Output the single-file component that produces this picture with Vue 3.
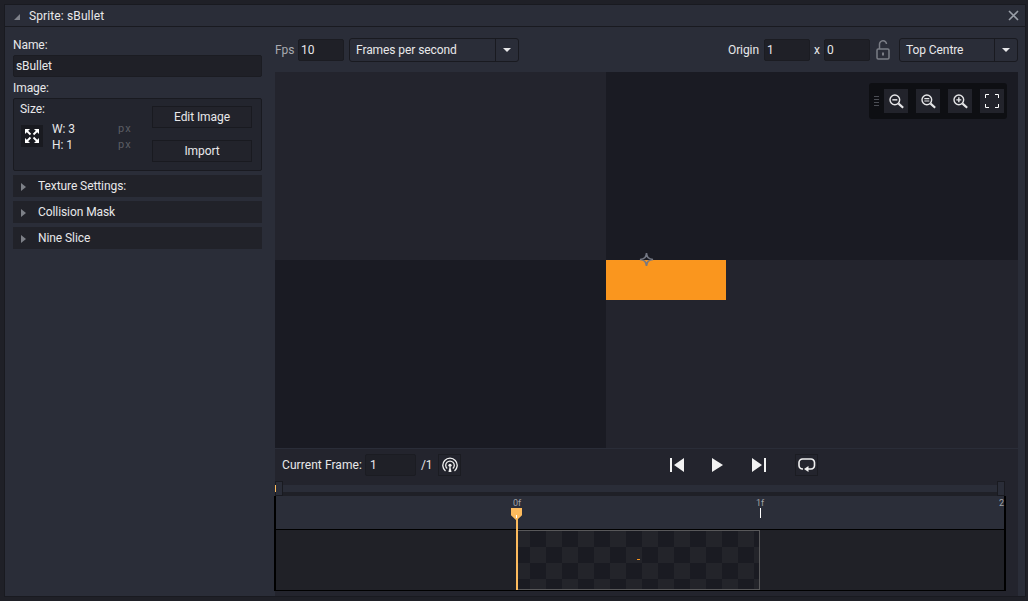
<script setup>
const sections = ['Texture Settings:', 'Collision Mask', 'Nine Slice']
</script>

<template>
  <div class="page">
    <div class="window">
      <header class="titlebar">
        <span class="corner"></span>
        <span class="title">Sprite: sBullet</span>
        <svg class="close" width="11" height="11" viewBox="0 0 11 11"><path d="M1 1l9 9M10 1l-9 9" stroke="#9a9fa8" stroke-width="1.6" fill="none"/></svg>
      </header>
      <div class="body">
        <aside class="left">
          <label class="lbl name-lbl">Name:</label>
          <div class="field name-field">sBullet</div>
          <label class="lbl image-lbl">Image:</label>
          <div class="imagebox">
            <div class="size-col">
              <div class="size-lbl">Size:</div>
              <div class="size-row">
                <div class="expand">
                  <svg width="14" height="14" viewBox="0 0 14 14" fill="#fff" stroke="#fff"><path d="M0 0h5L0 5z" stroke="none"/><path d="M14 0v5L9 0z" stroke="none"/><path d="M0 14V9l5 5z" stroke="none"/><path d="M14 14H9l5-5z" stroke="none"/><path d="M2 2l3.500 3.500M12 2L8.500 5.500M2 12l3.500-3.500M12 12L8.500 8.500" stroke-width="1.800" fill="none"/></svg>
                </div>
                <div class="dims"><span>W: 3</span><span>H: 1</span></div>
                <div class="units"><span>px</span><span>px</span></div>
              </div>
            </div>
            <div class="btns">
              <div class="btn">Edit Image</div>
              <div class="btn">Import</div>
            </div>
          </div>
          <div v-for="s in sections" :key="s" class="section">
            <span class="arrow"></span><span>{{ s }}</span>
          </div>
        </aside>
        <main class="right">
          <div class="toprow">
            <span class="dim-lbl">Fps</span>
            <div class="field fps">10</div>
            <div class="select sel-fps"><span class="sel-text">Frames per second</span><span class="caret"><i></i></span></div>
            <span class="spacer"></span>
            <span class="origin-lbl">Origin</span>
            <div class="field origin">1</div>
            <span class="x-lbl">x</span>
            <div class="field origin">0</div>
            <svg class="lock" width="14" height="20" viewBox="0 0 14 20" fill="none" stroke="#7a7d85" stroke-width="1.500"><path d="M3.500 9V4.500a3.500 3.500 0 0 1 7-.5"/><rect x="1" y="9" width="12" height="10" rx="1.200"/><path d="M7 12.500v3" stroke-width="2"/></svg>
            <div class="select sel-origin"><span class="sel-text">Top Centre</span><span class="caret"><i></i></span></div>
          </div>
          <div class="canvas">
            <div class="q light"></div><div class="q dark"></div>
            <div class="q dark"></div><div class="q light"></div>
            <div class="sprite"></div>
            <svg class="origin-mark" width="15" height="15" viewBox="0 0 15 15" fill="none" stroke="#747884" stroke-width="1.600"><path d="M7.500 1C8 5.500 9.500 7 14 7.500 9.500 8 8 9.500 7.500 14 7 9.500 5.500 8 1 7.500 5.500 7 7 5.500 7.500 1z"/></svg>
            <div class="zoombar">
              <span class="grip"><i></i><i></i><i></i><i></i></span>
              <div class="zbtn"><svg width="15" height="15" viewBox="0 0 18 18" fill="none" stroke="#e6e6e8" stroke-width="1.700"><circle cx="7" cy="7" r="5.800"/><path d="M4 7h6"/><path d="M11.500 11.500l5.500 5" stroke-width="2.600"/></svg></div>
              <div class="zbtn"><svg width="15" height="15" viewBox="0 0 18 18" fill="none" stroke="#e6e6e8" stroke-width="1.700"><circle cx="7" cy="7" r="5.800"/><path d="M4 5.600h6M4 8.400h6" stroke-width="1.400"/><path d="M11.500 11.500l5.500 5" stroke-width="2.600"/></svg></div>
              <div class="zbtn"><svg width="15" height="15" viewBox="0 0 18 18" fill="none" stroke="#e6e6e8" stroke-width="1.700"><circle cx="7" cy="7" r="5.800"/><path d="M4 7h6M7 4v6"/><path d="M11.500 11.500l5.500 5" stroke-width="2.600"/></svg></div>
              <div class="zbtn"><svg width="14" height="14" viewBox="0 0 14 14" fill="none" stroke="#fff" stroke-width="1"><path d="M.5 4V.5H4M10 .5h3.500V4M13.500 10v3.500H10M4 13.500H.5V10"/></svg></div>
            </div>
          </div>
          <div class="lower">
            <div class="transport">
              <div class="tleft">
                <span class="cf-lbl">Current Frame:</span>
                <div class="field cf">1</div>
                <span class="of">/1</span>
                <div class="tbtn onion"><svg width="16" height="16" viewBox="0 0 16 16" fill="none" stroke="#f0f0f0" stroke-width="1.300"><path d="M3.500 14A7.200 7.200 0 1 1 12.500 14"/><path d="M5.200 11.600a4.300 4.300 0 1 1 5.600 0"/><circle cx="8" cy="8.300" r="1.600" fill="#f0f0f0" stroke="none"/><path d="M6.500 15l1-5h1l1 5z" fill="#f0f0f0" stroke="none"/></svg></div>
              </div>
              <div class="tcenter">
                <svg width="14" height="14" viewBox="0 0 14 14" fill="#f2f2f2"><path d="M0 0h2v14H0zM14 0v14L4 7z"/></svg>
                <svg class="play" width="11" height="14" viewBox="0 0 11 14" fill="#f2f2f2"><path d="M0 0l11 7L0 14z"/></svg>
                <svg width="14" height="14" viewBox="0 0 14 14" fill="#f2f2f2"><path d="M12 0h2v14h-2zM0 0v14l10-7z"/></svg>
              </div>
              <div class="tbtn loop"><svg width="18" height="14" viewBox="0 0 18 14" fill="none" stroke="#f0f0f0" stroke-width="1.600"><path d="M5 11H4.500A3.500 3.500 0 0 1 1 7.500v-3A3.500 3.500 0 0 1 4.500 1h8A3.500 3.500 0 0 1 16.500 4.500v3A3.500 3.500 0 0 1 13 11H9"/><path d="M10.500 8v6L6 11z" fill="#f0f0f0" stroke="none"/></svg></div>
            </div>
            <div class="scroll">
              <span class="handle hl"><i></i></span>
              <span class="handle hr"></span>
            </div>
            <div class="timeline">
              <div class="ruler"></div>
              <div class="track"></div>
              <span class="tick-lbl l0">0f</span>
              <span class="tick-lbl l1">1f</span>
              <span class="tick-lbl l2">2</span>
              <span class="tick"></span>
              <div class="frame"><span class="mini"></span></div>
              <span class="ph-line"></span>
              <span class="ph-head"></span>
              <span class="ph-mark"></span>
            </div>
          </div>
        </main>
      </div>
    </div>
  </div>
</template>

<style>
html, body { margin: 0; background: #1f2027; overflow: hidden; }
</style>

<style scoped>
.page {
  width: 1028px; height: 601px; box-sizing: border-box;
  padding: 4px 2px 4px 4px;
  font-family: Roboto, "Liberation Sans", sans-serif;
  font-size: 12px; letter-spacing: -.08px; color: #e8e8ea;
  white-space: nowrap;
}
.window {
  height: 100%; box-sizing: border-box;
  border: 1px solid #191a20;
  background: #2a2d38;
  display: flex; flex-direction: column;
}
.titlebar {
  height: 21px; flex: none; display: flex; align-items: center;
  border-bottom: 1px solid #191a20;
  padding-left: 9px; padding-right: 6px;
}
.corner { width: 0; height: 0; border-left: 6px solid transparent; border-bottom: 6px solid #7f828a; margin-right: 9px; margin-top: 2px; }
.title { flex: 1; letter-spacing: .12px; }
.close { flex: none; }
.body { flex: 1; display: flex; padding-left: 8px; min-height: 0; }
.left { width: 249px; flex: none; margin-right: 13px; display: flex; flex-direction: column; }
.lbl { display: block; line-height: 14px; }
.name-lbl { margin-top: 11px; margin-bottom: 3px; }
.image-lbl { margin-top: 4px; margin-bottom: 3px; }
.field {
  box-sizing: border-box; background: #1f2027; border: 1px solid #1b1c22; border-radius: 2px;
  height: 22px; line-height: 20px; padding-left: 2px;
}
.imagebox {
  box-sizing: border-box; height: 73px; background: #23252e; border: 1px solid #191a20; border-radius: 2px;
  display: flex; justify-content: space-between; padding: 7px 9px 0 6px;
}
.size-lbl { line-height: 14px; margin-top: -4px; }
.size-row { display: flex; margin-top: 8px; }
.expand {
  width: 24px; height: 24px; box-sizing: border-box; background: #191a20; border: 1px solid #23252e;
  display: flex; align-items: center; justify-content: center; margin-right: 8px;
}
.dims, .units { display: flex; flex-direction: column; line-height: 16px; }
.dims { width: 66px; margin-top: -3px; }
.units { color: #5b5d64; margin-top: -3px; letter-spacing: 1.200px; font-size: 11px; }
.btns { display: flex; flex-direction: column; gap: 12px; }
.btn {
  width: 100px; height: 22px; box-sizing: border-box; background: #22232b; border: 1px solid #191a20;
  text-align: center; line-height: 20px;
}
.section {
  height: 22px; background: #212229; margin-top: 4px; display: flex; align-items: center; line-height: 20px;
}
.arrow { width: 0; height: 0; border-left: 5px solid #7d8087; border-top: 4px solid transparent; border-bottom: 4px solid transparent; margin-left: 8px; margin-right: 12px; margin-top: 2px; }

.right { flex: 1; min-width: 0; margin-right: 7px; display: flex; flex-direction: column; }
.toprow { display: flex; align-items: center; height: 22px; margin-top: 12px; }
.dim-lbl { color: #a8aab0; width: 23px; }
.fps { width: 46px; margin-right: 5px; }
.select {
  box-sizing: border-box; height: 24px; background: #2a2d38; border: 1px solid #191a20; border-radius: 3px;
  display: flex; align-items: center;
}
.sel-text { flex: 1; padding-left: 6px; }
.caret { width: 22px; height: 100%; border-left: 1px solid #191a20; display: flex; align-items: center; justify-content: center; }
.caret i { width: 0; height: 0; border-top: 4px solid #e8e8ea; border-left: 4px solid transparent; border-right: 4px solid transparent; }
.sel-fps { width: 170px; }
.spacer { flex: 1; }
.origin-lbl { margin-right: 5px; }
.origin { width: 46px; }
.x-lbl { width: 14px; text-align: center; }
.lock { margin: 0 9px 0 6px; }
.sel-origin { width: 119px; }
.canvas {
  height: 376px; margin-top: 11px; position: relative; overflow: hidden;
  display: grid; grid-template-columns: 331px 1fr; grid-template-rows: 188px 188px;
}
.light { background: #23242d; }
.dark { background: #1a1b23; }
.sprite { position: absolute; left: 331px; top: 188px; width: 120px; height: 40px; background: #fa961e; }
.origin-mark { position: absolute; left: 364px; top: 180px; }
.zoombar {
  position: absolute; left: 594px; top: 11px; width: 138px; height: 36px; border-radius: 3px;
  background: #0e0f13; display: flex; align-items: center; gap: 8px; padding-left: 15px; box-sizing: border-box;
}
.grip { position: absolute; left: 5px; top: 13px; display: flex; flex-direction: column; gap: 2px; }
.grip i { display: block; width: 5px; height: 1px; background: #4b4d54; }
.zbtn { width: 24px; height: 24px; background: #22232b; display: flex; align-items: center; justify-content: center; }
.lower { flex: 1; margin-top: 1px; background: #23242d; display: flex; flex-direction: column; }
.transport { height: 32px; flex: none; display: flex; align-items: center; position: relative; }
.tleft { display: flex; align-items: center; padding-left: 7px; }
.cf-lbl { width: 83px; letter-spacing: .07px; }
.cf { width: 51px; margin-right: 5px; padding-left: 4px; }
.of { width: 17px; }
.tbtn { box-sizing: border-box; width: 23px; height: 22px; border: 1px solid #1b1c22; display: flex; align-items: center; justify-content: center; }
.tcenter { position: absolute; left: 395px; top: 9px; width: 96px; display: flex; justify-content: space-between; }
.play { margin-right: 2px; }
.loop { position: absolute; left: 520px; top: 5px; }
.scroll { height: 11px; margin-top: 4px; width: 730px; position: relative; background: linear-gradient(#2a2d38 0 7px, #1f2027 7px); flex: none; }
.handle { position: absolute; top: -4px; width: 8px; height: 15px; box-sizing: border-box; background: #2a2d38; border: 1px solid #191a20; }
.hl { left: 0; }
.hr { right: 0; }
.hl i { position: absolute; left: -1px; top: 3px; width: 1px; height: 7px; background: #fdbb5d; }
.timeline {
  width: 732px; margin-left: -1px; margin-top: 0; height: 95px; box-sizing: border-box;
  border-left: 2px solid #000; border-right: 2px solid #000; border-bottom: 1px solid #000;
  position: relative; flex: none;
}
.ruler { height: 33px; background: #2b2e39; border-bottom: 1px solid #000; }
.track { height: 60px; background: #202127; }
.tick-lbl { position: absolute; top: 2px; font-size: 9px; line-height: 11px; color: #a0a2a8; letter-spacing: 0; font-family: "Liberation Sans Narrow", Roboto, sans-serif; }
.l0 { left: 237px; }
.l1 { left: 480px; }
.l2 { left: 723px; }
.tick { position: absolute; left: 484px; top: 12px; width: 1px; height: 10px; background: #fff; }
.frame {
  position: absolute; left: 241px; top: 34px; width: 243px; height: 60px; box-sizing: border-box;
  border: 1px solid #58585a;
  background-color: #23242a;
  background-image: conic-gradient(#1a1b22 25%, transparent 0 50%, #1a1b22 0 75%, transparent 0);
  background-size: 32px 32px; background-position: -4px 0;
}
.mini { position: absolute; left: 119px; top: 28px; width: 3px; height: 1px; background: #fa961e; }
.ph-line { position: absolute; left: 240px; top: 22px; width: 2px; height: 72px; background: #fdbb5d; }
.ph-head { position: absolute; left: 235px; top: 12px; width: 11px; height: 12px; background: #fdbb5d; clip-path: polygon(0 0, 100% 0, 100% 60%, 55% 100%, 45% 100%, 0 60%); }
.ph-mark { position: absolute; left: 240px; top: 19px; width: 1px; height: 3px; background: #fff; }
</style>
